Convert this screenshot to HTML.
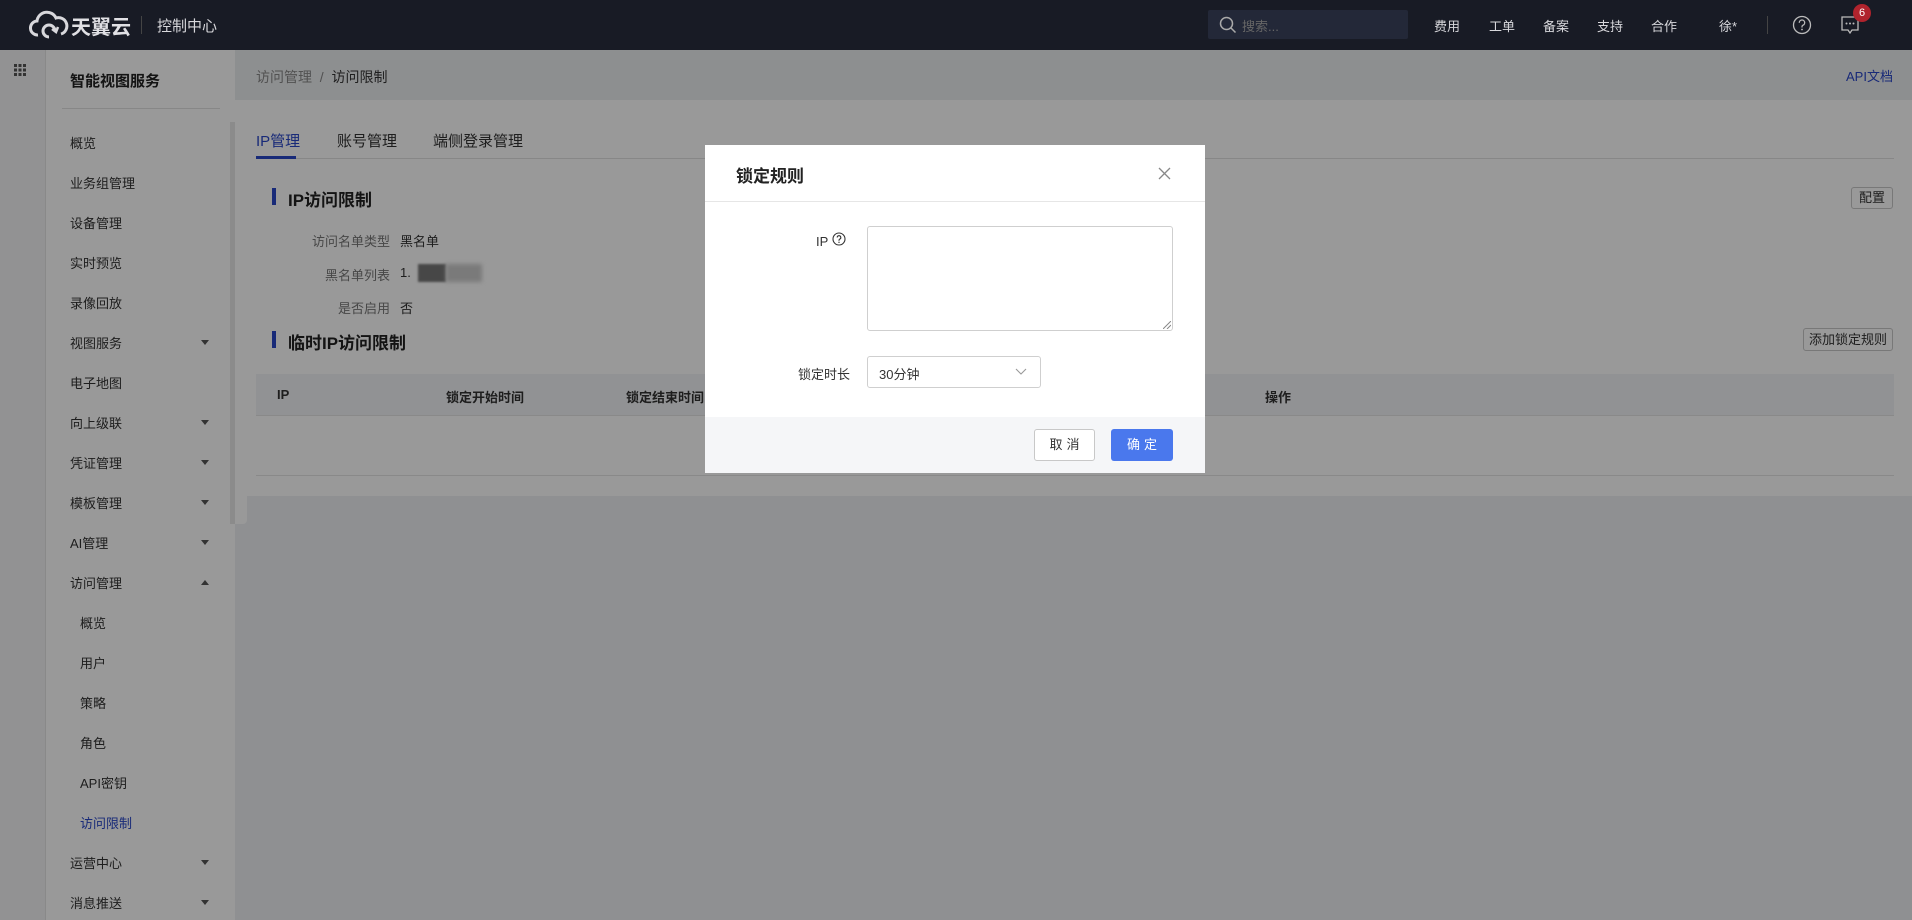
<!DOCTYPE html>
<html><head><meta charset="utf-8"><style>
*{box-sizing:border-box;margin:0;padding:0}
body{width:1912px;height:920px;position:relative;overflow:hidden;background:#eef0f3;font-family:"Liberation Sans","Noto Sans CJK SC",sans-serif;color:#333;font-size:14px}
.a{position:absolute;white-space:nowrap}
#hdr{position:absolute;left:0;top:0;width:1912px;height:50px;background:#181b25;color:#d8d8dc;z-index:20}
#ov{position:absolute;left:0;top:50px;width:1912px;height:870px;background:rgba(0,0,0,.4);z-index:10}
.mi{position:absolute;left:70px;font-size:13px;color:#333}
.arr{position:absolute;left:201px;width:0;height:0;border-left:4px solid transparent;border-right:4px solid transparent;border-top:5px solid #555}
.btn{position:absolute;border:1px solid #c8c8c8;border-radius:3px;background:#fff;font-size:13px;text-align:center;color:#333}
</style></head><body>
<div id="hdr">
 <svg class="a" style="left:29px;top:10px" width="40" height="30" viewBox="0 0 40 30"><path d="M9 25 A7 7 0 0 1 8 11 A10 10 0 0 1 27 8 A8 8 0 0 1 32 24" fill="none" stroke="#d8d8dc" stroke-width="3"/><path d="M20 27 A6 6 0 1 1 26 21" fill="none" stroke="#d8d8dc" stroke-width="3"/><path d="M23 19 l4 3 l2-5" fill="none" stroke="#d8d8dc" stroke-width="2.5"/></svg>
 <div class="a" style="left:71px;top:11px;font-size:20px;font-weight:bold;color:#e0e0e4">天翼云</div>
 <div class="a" style="left:141px;top:16px;width:1px;height:18px;background:#444"></div>
 <div class="a" style="left:157px;top:15px;font-size:15px">控制中心</div>
 <div class="a" style="left:1208px;top:10px;width:200px;height:29px;background:#232838;border-radius:2px"></div>
 <svg class="a" style="left:1219px;top:16px" width="18" height="18" viewBox="0 0 18 18"><circle cx="7.5" cy="7.5" r="6" fill="none" stroke="#aaa" stroke-width="1.5"/><path d="M12 12l4.5 4.5" stroke="#aaa" stroke-width="1.5"/></svg>
 <div class="a" style="left:1242px;top:16px;font-size:13px;color:#666">搜索...</div>
 <div class="a" style="left:1434px;top:16px;font-size:13px">费用</div>
 <div class="a" style="left:1489px;top:16px;font-size:13px">工单</div>
 <div class="a" style="left:1543px;top:16px;font-size:13px">备案</div>
 <div class="a" style="left:1597px;top:16px;font-size:13px">支持</div>
 <div class="a" style="left:1651px;top:16px;font-size:13px">合作</div>
 <div class="a" style="left:1719px;top:16px;font-size:13px">徐*</div>
 <div class="a" style="left:1767px;top:16px;width:1px;height:18px;background:#444"></div>
 <svg class="a" style="left:1792px;top:15px" width="20" height="20" viewBox="0 0 20 20"><circle cx="10" cy="10" r="8.5" fill="none" stroke="#bbb" stroke-width="1.3"/><path d="M7.3 7.8a2.7 2.7 0 1 1 3.5 2.5c-.6.3-.8.7-.8 1.4v.8" fill="none" stroke="#bbb" stroke-width="1.3"/><circle cx="10" cy="14.5" r=".9" fill="#bbb"/></svg>
 <svg class="a" style="left:1840px;top:15px" width="20" height="22" viewBox="0 0 20 22"><path d="M2 2h16v13h-6l-2 3-2-3H2z" fill="none" stroke="#bbb" stroke-width="1.3"/><circle cx="6.5" cy="8.5" r="1" fill="#bbb"/><circle cx="10" cy="8.5" r="1" fill="#bbb"/><circle cx="13.5" cy="8.5" r="1" fill="#bbb"/></svg>
 <div class="a" style="left:1853px;top:4px;width:18px;height:18px;border-radius:9px;background:#b0232d;color:#fff;font-size:11px;text-align:center;line-height:18px">6</div>
</div>

<!-- rail -->
<div class="a" style="left:0;top:50px;width:46px;height:870px;background:#f3f4f6;border-right:1px solid #e4e4e4"></div>
<svg class="a" style="left:14px;top:64px" width="12" height="12" viewBox="0 0 12 12" fill="#555"><rect x="0" y="0" width="3" height="3"/><rect x="4.5" y="0" width="3" height="3"/><rect x="9" y="0" width="3" height="3"/><rect x="0" y="4.5" width="3" height="3"/><rect x="4.5" y="4.5" width="3" height="3"/><rect x="9" y="4.5" width="3" height="3"/><rect x="0" y="9" width="3" height="3"/><rect x="4.5" y="9" width="3" height="3"/><rect x="9" y="9" width="3" height="3"/></svg>
<!-- sidebar -->
<div class="a" style="left:46px;top:50px;width:189px;height:870px;background:#fff"></div>
<div class="a" style="left:70px;top:70px;font-size:15px;font-weight:bold;color:#222">智能视图服务</div>
<div class="a" style="left:62px;top:108px;width:158px;height:1px;background:#e2e2e2"></div>
<div class="a" style="left:230px;top:122px;width:5px;height:402px;background:#e8e8e8"></div>
<div class="mi" style="top:133px">概览</div>
<div class="mi" style="top:173px">业务组管理</div>
<div class="mi" style="top:213px">设备管理</div>
<div class="mi" style="top:253px">实时预览</div>
<div class="mi" style="top:293px">录像回放</div>
<div class="mi" style="top:333px">视图服务</div><div class="arr" style="top:340px"></div>
<div class="mi" style="top:373px">电子地图</div>
<div class="mi" style="top:413px">向上级联</div><div class="arr" style="top:420px"></div>
<div class="mi" style="top:453px">凭证管理</div><div class="arr" style="top:460px"></div>
<div class="mi" style="top:493px">模板管理</div><div class="arr" style="top:500px"></div>
<div class="mi" style="top:533px">AI管理</div><div class="arr" style="top:540px"></div>
<div class="mi" style="top:573px">访问管理</div><div class="arr" style="top:580px;border-top:none;border-bottom:5px solid #555"></div>
<div class="mi" style="left:80px;top:613px">概览</div>
<div class="mi" style="left:80px;top:653px">用户</div>
<div class="mi" style="left:80px;top:693px">策略</div>
<div class="mi" style="left:80px;top:733px">角色</div>
<div class="mi" style="left:80px;top:773px">API密钥</div>
<div class="mi" style="left:80px;top:813px;color:#2946c9">访问限制</div>
<div class="mi" style="top:853px">运营中心</div><div class="arr" style="top:860px"></div>
<div class="mi" style="top:893px">消息推送</div><div class="arr" style="top:900px"></div>
<div class="a" style="left:235px;top:470px;width:12px;height:54px;background:#fff;border-radius:0 4px 4px 0"></div>
<div class="a" style="left:238px;top:481px;width:0;height:0;border-top:4px solid transparent;border-bottom:4px solid transparent;border-right:4px solid #333"></div>

<!-- breadcrumb -->
<div class="a" style="left:235px;top:50px;width:1677px;height:50px;background:#eceef1"></div>
<div class="a" style="left:256px;top:67px;font-size:14px;color:#888">访问管理 &nbsp;/&nbsp; <span style="color:#333">访问限制</span></div>
<div class="a" style="left:1846px;top:66px;font-size:13px;color:#2946c9">API文档</div>

<!-- card -->
<div class="a" style="left:235px;top:100px;width:1677px;height:396px;background:#fff"></div>
<div class="a" style="left:256px;top:130px;font-size:15px;color:#2946c9">IP管理</div>
<div class="a" style="left:337px;top:130px;font-size:15px">账号管理</div>
<div class="a" style="left:433px;top:130px;font-size:15px">端侧登录管理</div>
<div class="a" style="left:256px;top:158px;width:1638px;height:1px;background:#e2e2e2"></div>
<div class="a" style="left:256px;top:156px;width:40px;height:3px;background:#2946c9"></div>
<div class="a" style="left:272px;top:188px;width:4px;height:17px;background:#2946c9"></div>
<div class="a" style="left:288px;top:186px;font-size:17px;font-weight:bold;color:#222">IP访问限制</div>
<div class="btn" style="left:1851px;top:187px;width:42px;height:22px;line-height:20px">配置</div>
<div class="a" style="left:312px;top:231px;font-size:13px;color:#777">访问名单类型</div><div class="a" style="left:400px;top:231px;font-size:13px">黑名单</div>
<div class="a" style="left:325px;top:265px;font-size:13px;color:#777">黑名单列表</div><div class="a" style="left:400px;top:265px;font-size:13px">1.</div>
<div class="a" style="left:418px;top:264px;width:28px;height:18px;background:#777;filter:blur(1px)"></div><div class="a" style="left:446px;top:264px;width:36px;height:18px;background:#ccc;filter:blur(2px)"></div>
<div class="a" style="left:338px;top:298px;font-size:13px;color:#777">是否启用</div><div class="a" style="left:400px;top:298px;font-size:13px">否</div>
<div class="a" style="left:272px;top:331px;width:4px;height:17px;background:#2946c9"></div>
<div class="a" style="left:288px;top:329px;font-size:17px;font-weight:bold;color:#222">临时IP访问限制</div>
<div class="btn" style="left:1803px;top:328px;width:90px;height:23px;line-height:21px">添加锁定规则</div>
<div class="a" style="left:256px;top:374px;width:1638px;height:42px;background:#f2f4f7;border-bottom:1px solid #e4e4e4"></div>
<div class="a" style="left:277px;top:387px;font-size:13px;font-weight:bold">IP</div>
<div class="a" style="left:446px;top:387px;font-size:13px;font-weight:bold">锁定开始时间</div>
<div class="a" style="left:626px;top:387px;font-size:13px;font-weight:bold">锁定结束时间</div>
<div class="a" style="left:1265px;top:387px;font-size:13px;font-weight:bold">操作</div>
<div class="a" style="left:256px;top:475px;width:1638px;height:1px;background:#e4e4e4"></div>

<div id="ov"></div>

<!-- modal -->
<div class="a" style="left:705px;top:145px;width:500px;height:328px;background:#fff;z-index:30">
 <div class="a" style="left:31px;top:17px;font-size:17px;font-weight:bold;color:#222">锁定规则</div>
 <svg class="a" style="left:453px;top:22px" width="13" height="13" viewBox="0 0 13 13"><path d="M1 1l11 11M12 1L1 12" stroke="#888" stroke-width="1.3"/></svg>
 <div class="a" style="left:0;top:56px;width:500px;height:1px;background:#e6e6e6"></div>
 <div class="a" style="left:111px;top:89px;font-size:13px">IP</div>
 <svg class="a" style="left:127px;top:87px" width="14" height="14" viewBox="0 0 14 14"><circle cx="7" cy="7" r="6" fill="none" stroke="#333" stroke-width="1.1"/><path d="M5.2 5.5a1.8 1.8 0 1 1 2.4 1.7c-.4.2-.6.5-.6 1v.6" fill="none" stroke="#333" stroke-width="1.1"/><circle cx="7" cy="10.3" r=".7" fill="#333"/></svg>
 <div class="a" style="left:162px;top:81px;width:306px;height:105px;border:1px solid #cfcfcf;border-radius:3px"></div>
 <svg class="a" style="left:458px;top:176px" width="8" height="8"><path d="M0 8L8 0M4 8L8 4" stroke="#888"/></svg>
 <div class="a" style="left:93px;top:219px;font-size:13px;color:#333">锁定时长</div>
 <div class="a" style="left:162px;top:211px;width:174px;height:32px;border:1px solid #cfcfcf;border-radius:3px"></div>
 <div class="a" style="left:174px;top:219px;font-size:13px">30分钟</div>
 <svg class="a" style="left:310px;top:223px" width="12" height="8"><path d="M1 1l5 5 5-5" fill="none" stroke="#999" stroke-width="1.1"/></svg>
 <div class="a" style="left:0;top:272px;width:500px;height:56px;background:#f5f6f8"></div>
 <div class="btn" style="left:329px;top:284px;width:61px;height:32px;line-height:30px;letter-spacing:4px;text-indent:4px">取消</div>
 <div class="a" style="left:406px;top:284px;width:62px;height:32px;line-height:32px;border-radius:3px;background:#4a78ed;color:#fff;font-size:13px;text-align:center;letter-spacing:4px;text-indent:4px">确定</div>
</div>
</body></html>
